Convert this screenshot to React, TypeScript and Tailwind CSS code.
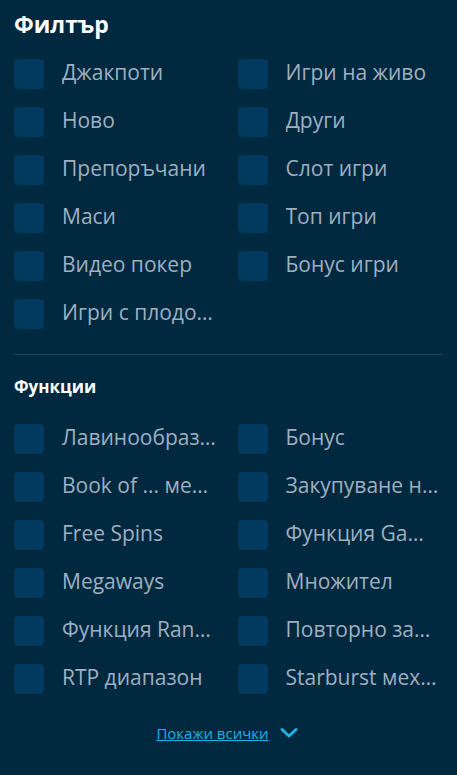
import React from "react";

const filters = [
  "Джакпоти",
  "Игри на живо",
  "Ново",
  "Други",
  "Препоръчани",
  "Слот игри",
  "Маси",
  "Топ игри",
  "Видео покер",
  "Бонус игри",
  "Игри с плодове",
];

const features = [
  "Лавинообразни барабани",
  "Бонус",
  "Book of ... механика",
  "Закупуване на бонус",
  "Free Spins",
  "Функция Gamble",
  "Megaways",
  "Множител",
  "Функция Random",
  "Повторно завъртане",
  "RTP диапазон",
  "Starburst механика",
];

function Item({ label }: { label: string }) {
  return (
    <label className="flex items-center gap-[18px] min-w-0 h-[30px] pr-[3px] cursor-pointer">
      <span className="w-[30px] h-[30px] shrink-0 rounded-[4px] bg-[#003a5e]" />
      <span className="truncate text-[21px] leading-[30px] pb-[4px] text-[#9fb0c2]">{label}</span>
    </label>
  );
}

export default function App() {
  return (
    <div
      className="w-[457px] h-[775px] bg-[#00283f] px-[14px] pt-[8px]"
      style={{ fontFamily: '"Open Sans", sans-serif' }}
    >
      <h2 className="text-[23px] font-bold leading-[32px] text-white">Филтър</h2>
      <div className="mt-[19px] grid grid-cols-2 gap-x-[18px] gap-y-[18px]">
        {filters.map((f) => (
          <Item key={f} label={f} />
        ))}
      </div>
      <div className="mt-[25px] h-px bg-[#1d4360]" />
      <h3 className="mt-[20px] text-[17px] font-bold leading-[24px] text-white">Функции</h3>
      <div className="mt-[25px] grid grid-cols-2 gap-x-[18px] gap-y-[18px]">
        {features.map((f) => (
          <Item key={f} label={f} />
        ))}
      </div>
      <div className="mt-[29px] flex items-center justify-center gap-[10px] pr-[2px]">
        <a className="text-[15px] leading-[20px] text-[#19b3e6] underline">Покажи всички</a>
        <svg width="20" height="14" viewBox="0 0 20 14" fill="none">
          <path d="M3 3.5 L10 10 L17 3.5" stroke="#19b3e6" strokeWidth="3" strokeLinecap="round" strokeLinejoin="round" />
        </svg>
      </div>
    </div>
  );
}
